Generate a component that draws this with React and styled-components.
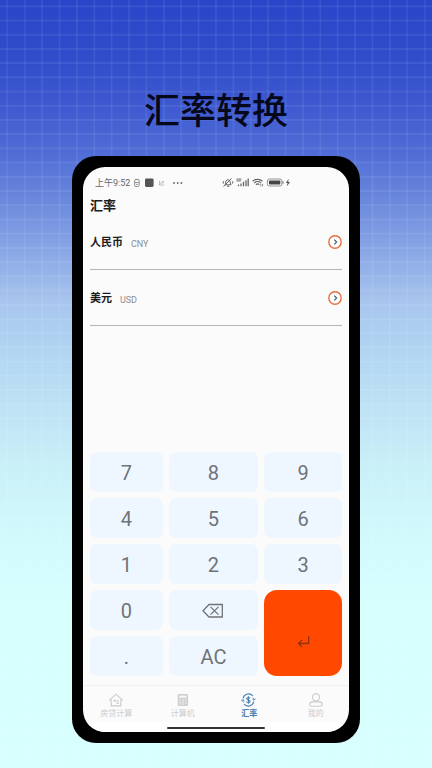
import styled, { createGlobalStyle } from "styled-components";
import { useState } from "react";

const GlobalStyle = createGlobalStyle`
  * {
    box-sizing: border-box;
  }

  body {
    margin: 0;
    font-family: Roboto, "Noto Sans CJK SC", sans-serif;
  }

  button {
    border: none;
    padding: 0;
    background: none;
    font-family: inherit;
    cursor: pointer;
  }
`;

const Page = styled.div`
  min-height: 100vh;
  display: flex;
  flex-direction: column;
  align-items: center;
  padding: 92px 0 25px;
  background:
    repeating-linear-gradient(
      90deg,
      transparent 0 1.4%,
      rgba(255, 255, 255, 0.07) 1.6% 1.8%,
      transparent 2% 4.025%
    ),
    repeating-linear-gradient(
      180deg,
      transparent 0 0.65%,
      rgba(255, 255, 255, 0.07) 0.75% 0.9%,
      transparent 1% 1.85%
    ),
    linear-gradient(
      #2a45c9 0%,
      #304cca 7%,
      #3c57cf 13%,
      #506dd6 20%,
      #6a88dc 26%,
      #8ba8e6 33%,
      #a7c4ee 39%,
      #b2d6f2 46%,
      #bfe2f5 53%,
      #caf0f8 61%,
      #d2fafc 70%,
      #d6fffe 80%,
      #d8fffe 100%
    );
`;

const Title = styled.h1`
  margin: 0 0 24px;
  font-size: 36px;
  line-height: 40px;
  font-weight: 500;
  color: #05071a;
`;

const Phone = styled.main`
  width: 66.7%;
  flex: 1;
  display: flex;
  padding: 11px;
  border-radius: 24px;
  background-color: #000;
`;

const Screen = styled.div`
  flex: 1;
  display: flex;
  flex-direction: column;
  border-radius: 22px;
  overflow: hidden;
  background-color: #fbfbfb;
`;

const StatusBar = styled.div`
  height: 31px;
  display: flex;
  align-items: center;
  justify-content: space-between;
  padding: 0 58px 0 12px;
  font-size: 9px;
  color: #666;
`;

const StatusGroup = styled.div`
  display: flex;
  align-items: center;
  gap: 4px;
`;

const Header = styled.h2`
  margin: 0;
  padding: 0 7px;
  font-size: 13px;
  line-height: 16px;
  font-weight: 700;
  color: #1c1c1c;
`;

const Currency = styled.div`
  height: 56px;
  margin: 0 7px;
  padding-top: 20px;
  border-bottom: 1px solid #b4b6b6;
`;

const CurrencyRow = styled.div`
  display: flex;
  align-items: center;
  gap: 8px;
  height: 16px;
`;

const CurrencyName = styled.span`
  padding-top: 2px;
  font-size: 11px;
  line-height: 16px;
  font-weight: 700;
  color: #1c1c1c;
`;

const CurrencyCode = styled.span`
  padding-top: 5px;
  font-size: 9px;
  line-height: 13px;
  color: #8c8c8c;
`;

const SelectButton = styled.button`
  display: flex;
  margin-left: auto;
`;

const Keypad = styled.div`
  display: grid;
  grid-template-columns: 73fr 89fr 78fr;
  grid-auto-rows: 40px;
  gap: 6px;
  margin: auto 7px 9px;
`;

const Key = styled.button`
  display: flex;
  align-items: center;
  justify-content: center;
  padding-top: 2px;
  border-radius: 7px;
  font-size: 20px;
  line-height: 24px;
  color: #707377;
  background-color: #eef7ff;
`;

const EnterKey = styled(Key)`
  grid-column: 3;
  grid-row: 4 / span 2;
  padding-top: 16px;
  border-radius: 13px;
  background-color: #ff4800;
`;

const TabBar = styled.nav`
  height: 37px;
  display: flex;
  border-top: 1px solid #f1f1f1;
`;

const Tab = styled.button`
  flex: 1;
  display: flex;
  flex-direction: column;
  align-items: center;
  padding-top: 7px;
  font-size: 8px;
  line-height: 14px;
  font-weight: ${(props) => (props.$active ? 700 : 400)};
  color: ${(props) => (props.$active ? "#4682b4" : "#cbcbcb")};
`;

const HomeArea = styled.div`
  height: 10px;
  display: flex;
  justify-content: center;
  padding-top: 5px;
  background-color: #fff;
`;

const HomeBar = styled.div`
  width: 37%;
  height: 2px;
  border-radius: 1px;
  background-color: #333;
`;

function StatusLeftIcons() {
  return (
    <svg width="50" height="10" viewBox="0 0 50 10" fill="none" stroke="#777">
      <rect x="0.6" y="1.5" width="4.6" height="7" rx="1.4" strokeWidth="0.8" />
      <path d="M0.8 4.6h4.2M2 1.5V0.8M3.9 1.5V0.8M2.2 6.5h1.6" strokeWidth="0.8" />
      <rect x="11" y="0.6" width="8.6" height="8.4" rx="1.4" fill="#555" stroke="none" />
      <path d="M25.5 2.8v4.2h4.5M26 6.5l2-3h2M28 5h2" stroke="#999" strokeWidth="0.6" />
      <g fill="#666" stroke="none">
        <circle cx="40" cy="5" r="0.9" />
        <circle cx="43.7" cy="5" r="0.9" />
        <circle cx="47.4" cy="5" r="0.9" />
      </g>
    </svg>
  );
}

function StatusRightIcons() {
  return (
    <svg width="69" height="11" viewBox="0 0 69 11" fill="none" stroke="#666">
      <path d="M3 7.8c.8-.9.6-2.4.9-3.6A2.2 2.2 0 0 1 8 4c.5 1.2.2 2.8 1 3.8zM5 9.3h2.2M1.5 9.6 9.6 1.4M1.3 4.2v2.4M10.7 4.2v2.4" strokeWidth="1" />
      <path d="M14.4 2.2h5M14.4 3.8h4.5" strokeWidth="1.2" stroke="#888" />
      <path d="M16.5 9.3V7.6M19 9.3V6.4M21.5 9.3V4.8M24 9.3V3.3M26.2 9.3V1.6" strokeWidth="1.3" />
      <path d="M30.7 4.2a7.2 7.2 0 0 1 9.8 0M32.3 6a4.9 4.9 0 0 1 6.6 0M34 7.7a2.3 2.3 0 0 1 3.2 0" strokeWidth="1.2" />
      <path d="M38.8 6.8v2.6M40.6 9.4V6.8" strokeWidth="0.7" />
      <rect x="45.4" y="2" width="14.5" height="7" rx="2" strokeWidth="0.9" stroke="#888" />
      <rect x="47" y="3.5" width="11.3" height="4" rx="0.8" fill="#444" stroke="none" />
      <path d="M61 4.3v2.4" strokeWidth="1" />
      <path d="M66.6 1.8 64 6h1.6l-.8 3.4L68 4.9h-1.8z" fill="#555" stroke="none" />
    </svg>
  );
}

function ArrowCircle() {
  return (
    <svg width="14" height="14" viewBox="0 0 14 14" fill="none">
      <circle cx="7" cy="7" r="6.2" fill="#fff" stroke="#e5703f" strokeWidth="1.4" />
      <path d="M6.3 4.7 8.6 7 6.3 9.3" stroke="#4d5566" strokeWidth="1.2" />
    </svg>
  );
}

function BackspaceIcon() {
  return (
    <svg width="22" height="16" viewBox="0 0 22 16" fill="none" stroke="#707377" strokeWidth="1.3">
      <path d="M7 1.5h13.3V14H7L1 7.75z" />
      <path d="m8.5 3.9 8 7.7M16.5 3.9l-8 7.7" />
    </svg>
  );
}

function EnterIcon() {
  return (
    <svg width="13" height="13" viewBox="0 0 13 13" fill="none" stroke="#94310c" strokeWidth="1.3">
      <path d="M11.7 1v7.5H1.6M5 5 1.5 8.5 5 12" />
    </svg>
  );
}

function HouseIcon() {
  return (
    <svg width="16" height="14" viewBox="0 0 16 14" fill="none" stroke="#cbcbcb" strokeWidth="1.1">
      <path d="M1.2 7.3 8 1.2l6.8 6.1M3.2 6.3v6.6h9.6V6.3" />
      <path d="M5.5 7.5h2.6M6.8 6.2V9M8.5 8l2 .4M8.6 10.3l1.9-3M9 10.5h2" strokeWidth="0.9" />
    </svg>
  );
}

function CalculatorIcon() {
  return (
    <svg width="16" height="14" viewBox="0 0 16 14">
      <rect x="2.7" y="1" width="10.4" height="12" rx="1" fill="#cfcfcf" />
      <rect x="4.3" y="2.6" width="7.2" height="2.2" fill="#f7f7f7" />
      <path d="M4.3 7h1.6M7.1 7h1.6M9.9 7h1.6M4.3 9h1.6M7.1 9h1.6M4.3 11h1.6M7.1 11h1.6M9.9 10h1.6" stroke="#f7f7f7" strokeWidth="1" />
    </svg>
  );
}

function ExchangeIcon() {
  return (
    <svg width="16" height="14" viewBox="0 0 16 14" fill="none" stroke="#4682b4" strokeWidth="1.1">
      <path d="M2.1 5.4A5.6 5.6 0 0 1 11.8 2.8M12.7 8.6A5.6 5.6 0 0 1 3 11.2" />
      <path d="M12.2 4.6a5.6 5.6 0 0 1 .9 2.4M1.7 7a5.6 5.6 0 0 0 .9 2.4M14.7 5.6 13 7.4l-1.7-1.5M.2 8.3l1.6-1.8L3.5 8" strokeWidth="0.9" />
      <path d="M9.1 5.3C8.6 4.2 5.7 4.2 5.7 5.7c0 1.6 3.4 1 3.4 2.7 0 1.5-3.1 1.5-3.6.2M7.4 3.3v7.4" strokeWidth="1.1" />
    </svg>
  );
}

function PersonIcon() {
  return (
    <svg width="16" height="14" viewBox="0 0 16 14" fill="none" stroke="#cbcbcb" strokeWidth="1.1">
      <circle cx="8" cy="4.2" r="3.6" />
      <path d="M5 8.9h6c1.8 0 3.2 1.2 3.2 2.5 0 1.2-.7 1.9-1.9 1.9H3.7c-1.2 0-1.9-.7-1.9-1.9 0-1.3 1.4-2.5 3.2-2.5z" />
    </svg>
  );
}

const currencies = [
  { name: "人民币", code: "CNY" },
  { name: "美元", code: "USD" },
];

const keys = ["7", "8", "9", "4", "5", "6", "1", "2", "3", "0", "back", ".", "AC"];

const tabs = [
  { name: "房贷计算", icon: <HouseIcon /> },
  { name: "计算机", icon: <CalculatorIcon /> },
  { name: "汇率", icon: <ExchangeIcon /> },
  { name: "我的", icon: <PersonIcon /> },
];

function App() {
  const [active, setActive] = useState("汇率");

  return (
    <Page>
      <GlobalStyle />
      <Title>汇率转换</Title>

      <Phone>
        <Screen>
          <StatusBar>
            <StatusGroup>
              <span>上午9:52</span>
              <StatusLeftIcons />
            </StatusGroup>
            <StatusRightIcons />
          </StatusBar>

          <Header>汇率</Header>

          {currencies.map((currency) => (
            <Currency key={currency.code}>
              <CurrencyRow>
                <CurrencyName>{currency.name}</CurrencyName>
                <CurrencyCode>{currency.code}</CurrencyCode>
                <SelectButton aria-label={currency.name}>
                  <ArrowCircle />
                </SelectButton>
              </CurrencyRow>
            </Currency>
          ))}

          <Keypad>
            {keys.map((key) =>
              key === "back" ? (
                <Key key={key} aria-label="Backspace">
                  <BackspaceIcon />
                </Key>
              ) : (
                <Key key={key}>{key}</Key>
              )
            )}
            <EnterKey aria-label="Enter">
              <EnterIcon />
            </EnterKey>
          </Keypad>

          <TabBar>
            {tabs.map((tab) => (
              <Tab
                key={tab.name}
                $active={tab.name === active}
                onClick={() => setActive(tab.name)}
              >
                {tab.icon}
                {tab.name}
              </Tab>
            ))}
          </TabBar>

          <HomeArea>
            <HomeBar />
          </HomeArea>
        </Screen>
      </Phone>
    </Page>
  );
}

export default App;
